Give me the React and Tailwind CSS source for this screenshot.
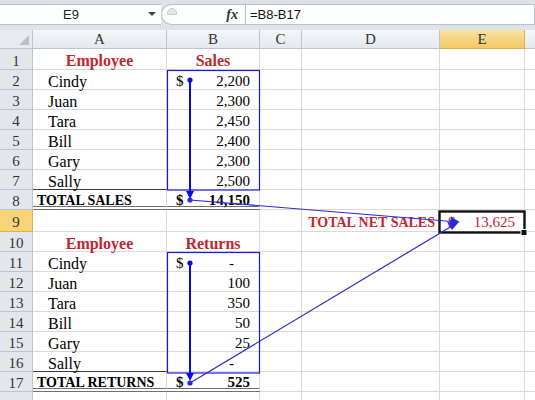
import React from 'react';

const serif = { fontFamily: '"Liberation Serif", "DejaVu Serif", serif' };
const sans = { fontFamily: '"Liberation Sans", "DejaVu Sans", sans-serif' };

const grid = 'border-r border-b border-[#d9d9d9]';

// sheet rows, top to bottom
const rows = [
  { n: 1, h: 'h-[21px]', kind: 'head', a: 'Employee', b: 'Sales' },
  { n: 2, a: 'Cindy', b: '2,200', dollar: true },
  { n: 3, a: 'Juan', b: '2,300' },
  { n: 4, a: 'Tara', b: '2,450' },
  { n: 5, a: 'Bill', b: '2,400' },
  { n: 6, a: 'Gary', b: '2,300' },
  { n: 7, a: 'Sally', b: '2,500', rule: true },
  { n: 8, kind: 'total', a: 'TOTAL SALES', b: '14,150' },
  { n: 9, h: 'h-[22px]', kind: 'net' },
  { n: 10, kind: 'head', a: 'Employee', b: 'Returns' },
  { n: 11, a: 'Cindy', b: '-', dollar: true },
  { n: 12, a: 'Juan', b: '100' },
  { n: 13, a: 'Tara', b: '350' },
  { n: 14, a: 'Bill', b: '50' },
  { n: 15, a: 'Gary', b: '25' },
  { n: 16, a: 'Sally', b: '-', rule: true },
  { n: 17, kind: 'total', a: 'TOTAL RETURNS', b: '525' },
  { n: 18, kind: 'blank' },
];

function FormulaBar() {
  return (
    <div className="h-[30px] bg-[#dfe3e9] pt-[4px] pb-[5px] flex" style={sans}>
      <div className="w-[161px] shrink-0 bg-white border-y border-[#b8c0ca] flex items-center relative">
        <span className="w-[142px] text-center text-[13px] text-[#222]">E9</span>
        <span className="absolute left-[148px] top-[7px] w-0 h-0 border-l-[4px] border-r-[4px] border-t-[4px] border-l-transparent border-r-transparent border-t-[#444]" />
      </div>
      <div className="w-[84px] shrink-0 bg-white border-y border-l border-[#b8c0ca] rounded-l-[11px] flex items-center relative">
        <span className="absolute left-[5px] top-[3px] w-[10px] h-[7px] rounded-t-full bg-[#e3e6ea] border border-[#c6ccd3]" />
        <span className="ml-auto mr-[7px] text-[14px] italic font-bold text-[#333]" style={serif}>
          fx
        </span>
      </div>
      <div className="flex-1 bg-white border border-[#b8c0ca] flex items-center pl-[4px] text-[13px] text-[#111]">
        =B8-B17
      </div>
    </div>
  );
}

function ColumnHeaders() {
  const cols = [
    { l: 'A', w: 'w-[134px]' },
    { l: 'B', w: 'w-[93px]' },
    { l: 'C', w: 'w-[42px]' },
    { l: 'D', w: 'w-[138px]' },
    { l: 'E', w: 'w-[85px]', sel: true },
  ];
  return (
    <div className="flex h-[19px] text-[15px] text-[#333]" style={serif}>
      <div className="w-[33px] shrink-0 bg-[#e6e9ee] border-r border-b border-[#bcc4cf] relative">
        <span className="absolute right-[3px] bottom-[3px] w-0 h-0 border-l-[10px] border-t-[10px] border-l-transparent border-t-transparent border-b-0 border-r-0 border-[#b3bac4] [border-bottom:10px_solid_#b9c0c9]" />
      </div>
      {cols.map((c) => (
        <div
          key={c.l}
          className={`${c.w} shrink-0 flex items-center justify-center pt-[1px] border-r border-b ${
            c.sel
              ? 'bg-gradient-to-b from-[#fae3a0] to-[#f3c765] border-[#e2b04a]'
              : 'bg-gradient-to-b from-[#f5f7f9] to-[#e4e8ed] border-[#bcc4cf]'
          }`}
        >
          {c.l}
        </div>
      ))}
      <div className="flex-1 bg-gradient-to-b from-[#f5f7f9] to-[#e4e8ed] border-b border-[#bcc4cf]" />
    </div>
  );
}

function SheetRow({ r }) {
  const red = 'text-[#c0282e]';
  const isTotal = r.kind === 'total';
  const aBorder = isTotal
    ? 'border-r border-[#d9d9d9] border-b-[4px] border-double border-b-[#6f6f6f]'
    : r.rule
      ? 'border-r border-b border-[#d9d9d9] border-b-[#3d3d3d]'
      : grid;
  const bBorder = isTotal
    ? 'border-r border-[#d9d9d9] border-b-[4px] border-double border-b-[#6f6f6f]'
    : grid;

  let aContent = null;
  let bContent = null;
  if (r.kind === 'head') {
    aContent = <span className={`w-full text-center font-bold text-[16px] ${red}`}>{r.a}</span>;
    bContent = <span className={`w-full text-center font-bold text-[16px] ${red}`}>{r.b}</span>;
  } else if (isTotal) {
    aContent = <span className="pl-[4px] font-bold text-[14px] text-black">{r.a}</span>;
    bContent = (
      <span className="w-full flex justify-between pl-[9px] pr-[9px] font-bold text-[15px] text-black">
        <span>$</span>
        <span>{r.b}</span>
      </span>
    );
  } else if (r.a) {
    aContent = <span className="pl-[15px] text-[16px] text-black">{r.a}</span>;
    bContent = (
      <span className="w-full flex justify-between pl-[9px] text-[15px] text-black">
        <span>{r.dollar ? '$' : ''}</span>
        <span className={r.b === '-' ? 'pr-[25px]' : 'pr-[9px]'}>{r.b}</span>
      </span>
    );
  }

  const h = r.h || 'h-[20px]';
  const sel = r.n === 9;

  return (
    <div className={`flex ${h}`} style={serif}>
      <div
        className={`w-[33px] shrink-0 flex items-center justify-center pt-[4px] border-r border-b text-[15px] text-[#333] ${
          sel ? 'bg-[#f6d477] border-[#e2b04a]' : 'bg-[#e3e7ec] border-[#bcc4cf]'
        }`}
      >
        {r.kind === 'blank' ? '' : r.n}
      </div>
      <div className={`w-[134px] shrink-0 flex items-center pt-[4px] ${aBorder}`}>{aContent}</div>
      <div className={`w-[93px] shrink-0 flex items-center pt-[4px] ${bBorder}`}>{bContent}</div>
      <div className={`w-[42px] shrink-0 ${grid}`} />
      <div className={`w-[138px] shrink-0 flex items-center justify-end pt-[4px] ${grid}`}>
        {r.kind === 'net' && (
          <span className={`pr-[4px] font-bold text-[14px] ${red}`}>TOTAL NET SALES</span>
        )}
      </div>
      <div className={`w-[85px] shrink-0 flex items-center pt-[4px] ${grid}`}>
        {r.kind === 'net' && (
          <span className={`w-full flex justify-between pl-[8px] pr-[9px] text-[15px] ${red}`}>
            <span>$</span>
            <span>13,625</span>
          </span>
        )}
      </div>
      <div className="flex-1 border-b border-[#d9d9d9]" />
    </div>
  );
}

// trace-precedent arrows, range outlines and the active cell frame
function Overlay() {
  const thick = '#0a0ae6';
  const thin = '#2a2ad8';
  return (
    <svg className="absolute left-0 top-0 pointer-events-none" width="535" height="400">
      <rect x="167.5" y="70.5" width="92" height="119.5" fill="none" stroke="#1b1bd6" strokeWidth="1.2" />
      <rect x="167.5" y="252.5" width="92" height="120.5" fill="none" stroke="#1b1bd6" strokeWidth="1.2" />

      <line x1="190" y1="80" x2="190" y2="192" stroke={thick} strokeWidth="2" />
      <circle cx="190" cy="80" r="2.6" fill={thick} />
      <polygon points="186,191 194,191 190,199" fill={thick} />

      <line x1="190" y1="263" x2="190" y2="374" stroke={thick} strokeWidth="2" />
      <circle cx="190" cy="263" r="2.6" fill={thick} />
      <polygon points="186,373 194,373 190,381" fill={thick} />

      <rect x="439.5" y="211.5" width="85" height="21" fill="none" stroke="#111" strokeWidth="2.4" />
      <rect x="521" y="229.5" width="6" height="6" fill="#111" stroke="#fff" strokeWidth="1" />

      <line x1="190" y1="200" x2="452" y2="221.5" stroke={thin} strokeWidth="1.2" />
      <circle cx="190" cy="200" r="2.6" fill={thin} />
      <polygon points="460,222 450,226 451,217" fill={thin} />

      <line x1="190" y1="383" x2="452" y2="226" stroke={thin} strokeWidth="1.2" />
      <circle cx="190" cy="383" r="2.6" fill={thin} />
      <polygon points="458,223 452,230 447,222" fill={thin} />
    </svg>
  );
}

export default function App() {
  return (
    <div className="relative w-[535px] h-[400px] overflow-hidden bg-white">
      <FormulaBar />
      <ColumnHeaders />
      {rows.map((r) => (
        <SheetRow key={r.n} r={r} />
      ))}
      <Overlay />
    </div>
  );
}
